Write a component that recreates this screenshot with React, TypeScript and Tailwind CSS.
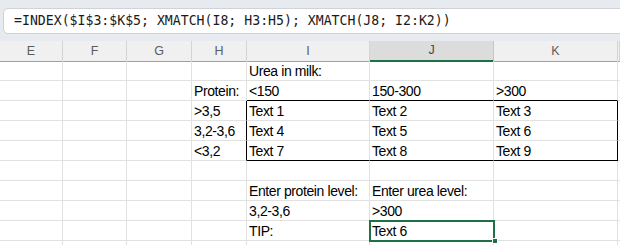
import React from 'react'

const cols = ['E', 'F', 'G', 'H', 'I', 'J', 'K', '']

// one array per visible row, columns E..L
const rows: string[][] = [
    ['', '', '', '', 'Urea in milk:', '', '', ''],
    ['', '', '', 'Protein:', '<150', '150-300', '>300', ''],
    ['', '', '', '>3,5', 'Text 1', 'Text 2', 'Text 3', ''],
    ['', '', '', '3,2-3,6', 'Text 4', 'Text 5', 'Text 6', ''],
    ['', '', '', '<3,2', 'Text 7', 'Text 8', 'Text 9', ''],
    ['', '', '', '', '', '', '', ''],
    ['', '', '', '', 'Enter protein level:', 'Enter urea level:', '', ''],
    ['', '', '', '', '3,2-3,6', '>300', '', ''],
    ['', '', '', '', 'TIP:', 'Text 6', '', ''],
    ['', '', '', '', '', '', '', ''],
]

const gridCols = 'grid grid-cols-[63px_64px_65px_55px_123px_124px_124px_1fr]'

// black outline round I3:K5 (row index 2..4, col index 4..6)
function cellBorders(r: number, c: number) {
    const inCols = c >= 4 && c <= 6
    const right = (r >= 2 && r <= 4 && (c === 3 || c === 6)) ? 'border-r-black' : 'border-r-[#e1e1e1]'
    const bottom = ((r === 1 || r === 4) && inCols) ? 'border-b-black' : 'border-b-[#e1e1e1]'
    return `${right} ${bottom}`
}

export default function App() {
    return (
        <div className="w-[620px] h-[245px] overflow-hidden bg-white">
            {/* formula bar */}
            <div className="bg-[#e7eaee] pt-[8px] pb-[7px] pl-[3px]">
                <div className="h-[26px] w-[640px] bg-white border border-[#cfd2d6] rounded-[5px] flex items-center pl-[10px]">
                    <span
                        className="text-[13.2px] text-[#1a1a1a] whitespace-pre"
                        style={{ fontFamily: '"DejaVu Sans Mono", "Liberation Mono", monospace' }}
                    >
                        =INDEX($I$3:$K$5; XMATCH(I8; H3:H5); XMATCH(J8; I2:K2))
                    </span>
                </div>
            </div>

            {/* column headers */}
            <div className={`${gridCols} h-[20px] bg-[#f0f0f0]`} style={{ fontFamily: '"Liberation Sans", Arial, sans-serif' }}>
                {cols.map((c, i) => (
                    <div
                        key={i}
                        className={
                            c === 'J'
                                ? 'bg-[#dcdcdc] border-r border-[#c6c6c6] border-b-2 border-b-[#1e7145] flex items-center justify-center text-[12.5px] text-[#4a4a4a]'
                                : 'border-r border-[#d4d4d4] border-b border-b-[#9f9f9f] flex items-center justify-center text-[12.5px] text-[#5c5c5c]'
                        }
                    >
                        {c}
                    </div>
                ))}
            </div>

            {/* cells */}
            <div style={{ fontFamily: '"Liberation Sans", Arial, sans-serif' }}>
                {rows.map((row, r) => (
                    <div key={r} className={`${gridCols} h-[20px]`}>
                        {row.map((v, c) => {
                            const active = r === 8 && c === 5
                            return (
                                <div
                                    key={c}
                                    className={`relative border-r border-b ${cellBorders(r, c)} pl-[2px] pt-[3px] text-[14px] tracking-[-0.4px] leading-[14px] text-black whitespace-nowrap ${active ? 'z-10 outline-2 -outline-offset-1 outline-[#1e7145]' : ''}`}
                                >
                                    {v}
                                    {active && (
                                        <span className="absolute -right-[5px] -bottom-[4px] w-[6px] h-[6px] bg-[#1e7145] border border-white" />
                                    )}
                                </div>
                            )
                        })}
                    </div>
                ))}
            </div>
        </div>
    )
}
